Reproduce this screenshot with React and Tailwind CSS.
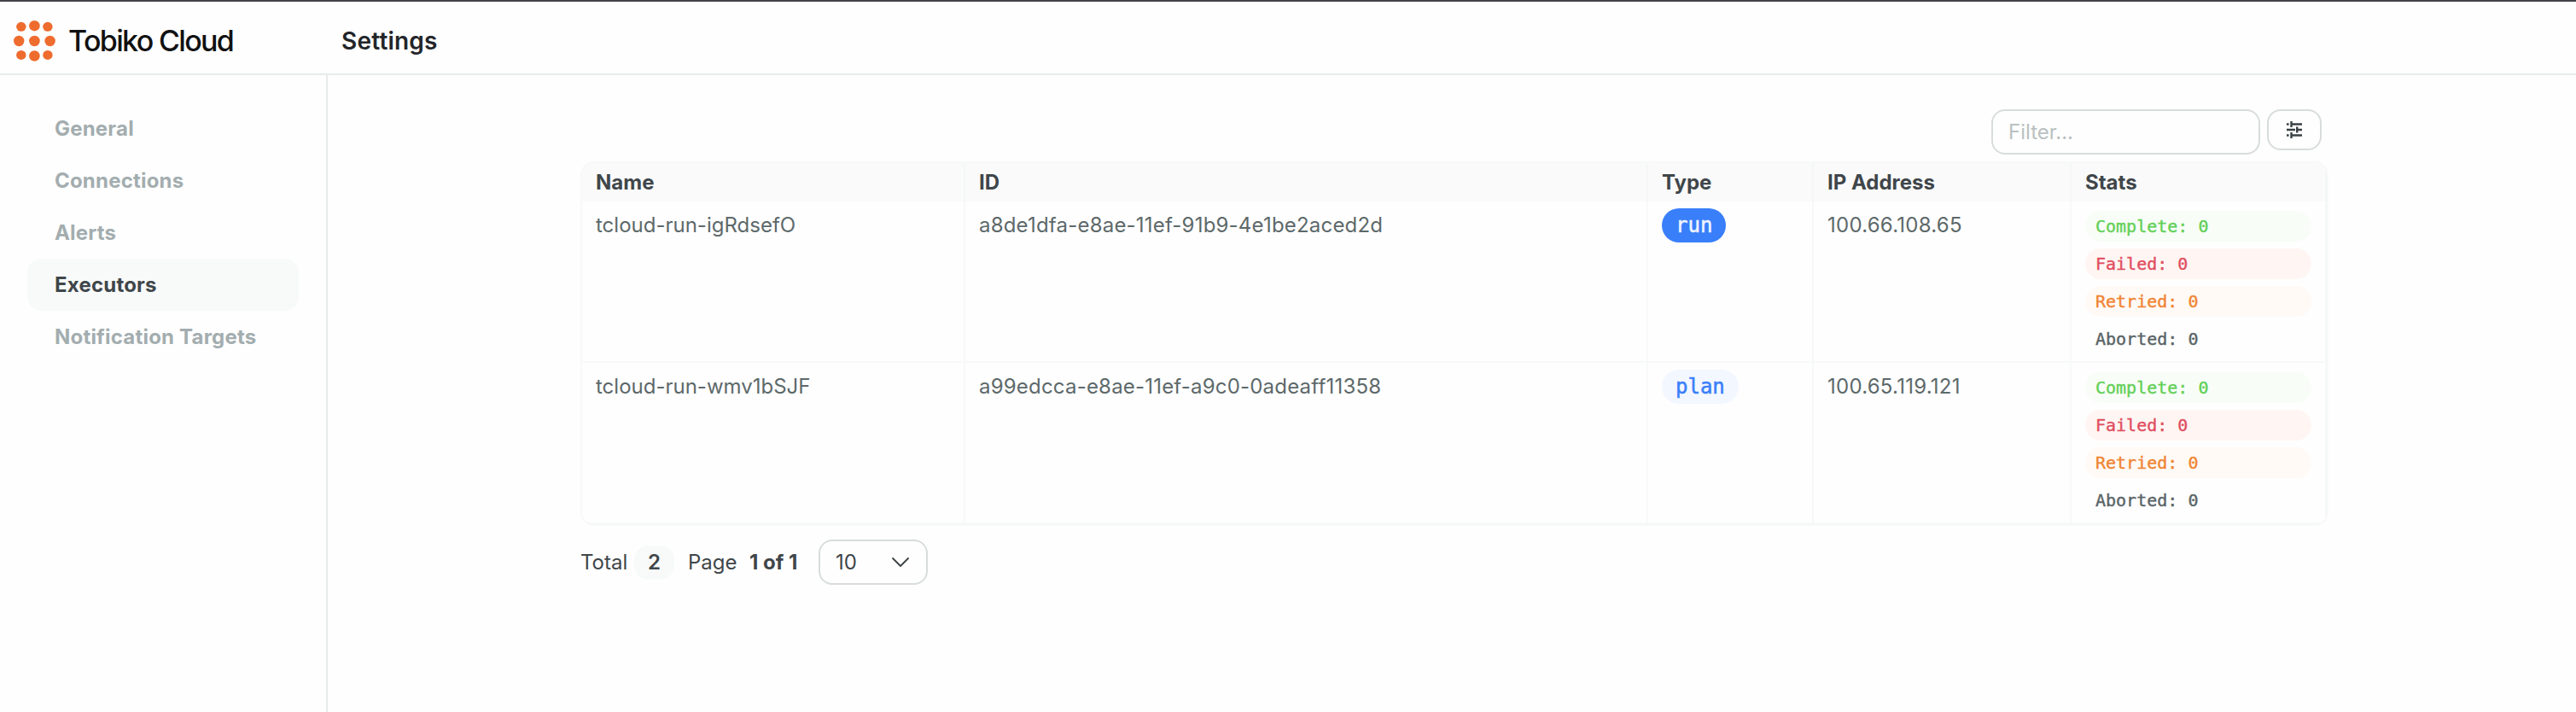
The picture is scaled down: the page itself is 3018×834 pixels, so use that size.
const NAV = ['General', 'Connections', 'Alerts', 'Executors', 'Notification Targets'];

const COLUMNS = 'grid grid-cols-[449px_800px_194px_302px_299px]';

const ROWS = [
  { name: 'tcloud-run-igRdsefO', id: 'a8de1dfa-e8ae-11ef-91b9-4e1be2aced2d', type: 'run', ip: '100.66.108.65' },
  { name: 'tcloud-run-wmv1bSJF', id: 'a99edcca-e8ae-11ef-a9c0-0adeaff11358', type: 'plan', ip: '100.65.119.121' },
];

const STATS = [
  { label: 'Complete', style: 'bg-[#f8fdf7] text-[#63d058]' },
  { label: 'Failed', style: 'bg-[#fff6f3] text-[#e04f62]' },
  { label: 'Retried', style: 'bg-[#fffaf6] text-[#f08533]' },
  { label: 'Aborted', style: 'text-[#596466]' },
];

const DOTS = [
  [24.8, 31.3, 5.7, 5.5], [40.4, 30.2, 6.3, 6.2], [55.9, 31.3, 5.7, 5.5],
  [22.2, 48, 6.2, 6.2], [40.4, 48, 6.3, 6.2], [58.6, 48, 6.2, 6.2],
  [24.8, 64.4, 5.7, 5.5], [40.4, 65.5, 6.3, 6.2], [55.9, 64.4, 5.7, 5.5],
];

function Logo() {
  return (
    <svg className="w-[80px] h-[84px] shrink-0" viewBox="0 2 80 84" fill="#ee6c2e">
      {DOTS.map(([cx, cy, rx, ry]) => (
        <ellipse key={`${cx}-${cy}`} cx={cx} cy={cy} rx={rx} ry={ry} />
      ))}
    </svg>
  );
}

function Header() {
  return (
    <header className="flex items-center h-[88px] border-t-2 border-t-[#45434a] border-b-2 border-b-[#e7eceb]">
      <div className="flex items-center w-[400px]">
        <Logo />
        <span className="pt-2 text-[34px] leading-[40px] font-medium tracking-[-1.65px] text-[#111111] whitespace-nowrap">Tobiko Cloud</span>
      </div>
      <h1 className="pt-2 text-[28px] leading-[40px] font-semibold tracking-[0.2px] text-[#232529]">Settings</h1>
    </header>
  );
}

function Sidebar() {
  return (
    <nav className="w-[384px] shrink-0 border-r-2 border-[#e7eceb] pl-8 pr-8 pt-8">
      {NAV.map((item) => (
        <div
          key={item}
          className={`flex items-center h-[61px] pl-8 rounded-2xl text-[24px] font-bold tracking-[0.2px] whitespace-nowrap ${
            item === 'Executors' ? 'bg-[#f8faf9] text-[#3f464a]' : 'text-[#a3adaf]'
          }`}
        >
          {item}
        </div>
      ))}
    </nav>
  );
}

function Toolbar() {
  return (
    <div className="flex justify-end items-start gap-2 pr-2 h-[61px]">
      <div className="flex items-center w-[315px] h-[53px] rounded-2xl border-2 border-[#d8dddc] pl-[18px] text-[24px] text-[#b9c1c0]">
        Filter...
      </div>
      <button className="flex items-center justify-center w-16 h-12 rounded-2xl border-2 border-[#d8dddc]">
        <svg className="w-[20px] h-[20px]" viewBox="0 0 20 20" stroke="#3a4144" strokeWidth="2.4" fill="none">
          <path d="M1 3.5h2.6M6.5 3.5H19M6.5 0v7M1 10h10M13 10h6M13.2 6.5v7M1 16.5h2.6M6.5 16.5H19M6.5 13v7" />
        </svg>
      </button>
    </div>
  );
}

function TypeBadge({ type }) {
  return (
    <span
      className={`inline-flex items-center h-10 px-4 rounded-full font-['DejaVu_Sans_Mono',monospace] text-[24px] [-webkit-text-stroke:0.5px_currentColor] ${
        type === 'run' ? 'bg-[#397ffa] text-[#eef4ff]' : 'bg-[#f3f7ff] text-[#397ffa]'
      }`}
    >
      {type}
    </span>
  );
}

function Table() {
  const cell = 'border-r-2 border-[#f7f9f8] pl-4';
  return (
    <div className="rounded-2xl border-2 border-[#f7f9f8] overflow-hidden">
      <div className={`${COLUMNS} h-[45px] bg-[#fafafa] text-[24px] leading-[46px] font-bold text-[#3f464a]`}>
        {['Name', 'ID', 'Type', 'IP Address', 'Stats'].map((h) => (
          <div key={h} className="border-r-2 border-[#f5f6f6] pl-4">{h}</div>
        ))}
      </div>
      {ROWS.map((row) => (
        <div key={row.id} className={`${COLUMNS} h-[189px] border-b-2 border-[#f7f9f8] text-[24px] leading-[56px] text-[#5d696a]`}>
          <div className={cell}>{row.name}</div>
          <div className={`${cell} tracking-[0.2px]`}>{row.id}</div>
          <div className={`${cell} flex items-start pt-2`}><TypeBadge type={row.type} /></div>
          <div className={`${cell} tracking-[0.25px]`}>{row.ip}</div>
          <div className={`${cell} pr-4 pt-[11px] flex flex-col gap-2`}>
            {STATS.map((s) => (
              <div key={s.label} className={`flex items-center h-9 rounded-full pl-3 font-['DejaVu_Sans_Mono',monospace] text-[20px] leading-none [-webkit-text-stroke:0.4px_currentColor] ${s.style}`}>
                {s.label}: 0
              </div>
            ))}
          </div>
        </div>
      ))}
    </div>
  );
}

function Pagination() {
  return (
    <div className="flex items-center h-[53px] mt-4 text-[24px] text-[#3f464a] whitespace-nowrap">
      <span className="w-[63px]">Total</span>
      <span className="flex items-center justify-center w-[47px] h-10 rounded-2xl bg-[#f8faf9] font-semibold">2</span>
      <span className="ml-4 w-[72px]">Page</span>
      <span className="w-[81px] font-bold">1 of 1</span>
      <div className="flex items-center justify-between w-32 h-[53px] rounded-2xl border-2 border-[#d8dddc] pl-[18px] pr-5">
        <span>10</span>
        <svg className="w-[20px] h-[11px]" viewBox="0 0 20 11" fill="none" stroke="#3a4144" strokeWidth="1.8" strokeLinecap="round" strokeLinejoin="round">
          <path d="M1 1l9 9 9-9" />
        </svg>
      </div>
    </div>
  );
}

export default function App() {
  return (
    <div className="flex flex-col w-[3018px] h-[834px] overflow-hidden bg-[#fefefe] font-['Inter',sans-serif]">
      <Header />
      <div className="flex flex-1 min-h-0">
        <Sidebar />
        <main className="ml-[296px] w-[2048px] pt-10">
          <Toolbar />
          <Table />
          <Pagination />
        </main>
      </div>
    </div>
  );
}
